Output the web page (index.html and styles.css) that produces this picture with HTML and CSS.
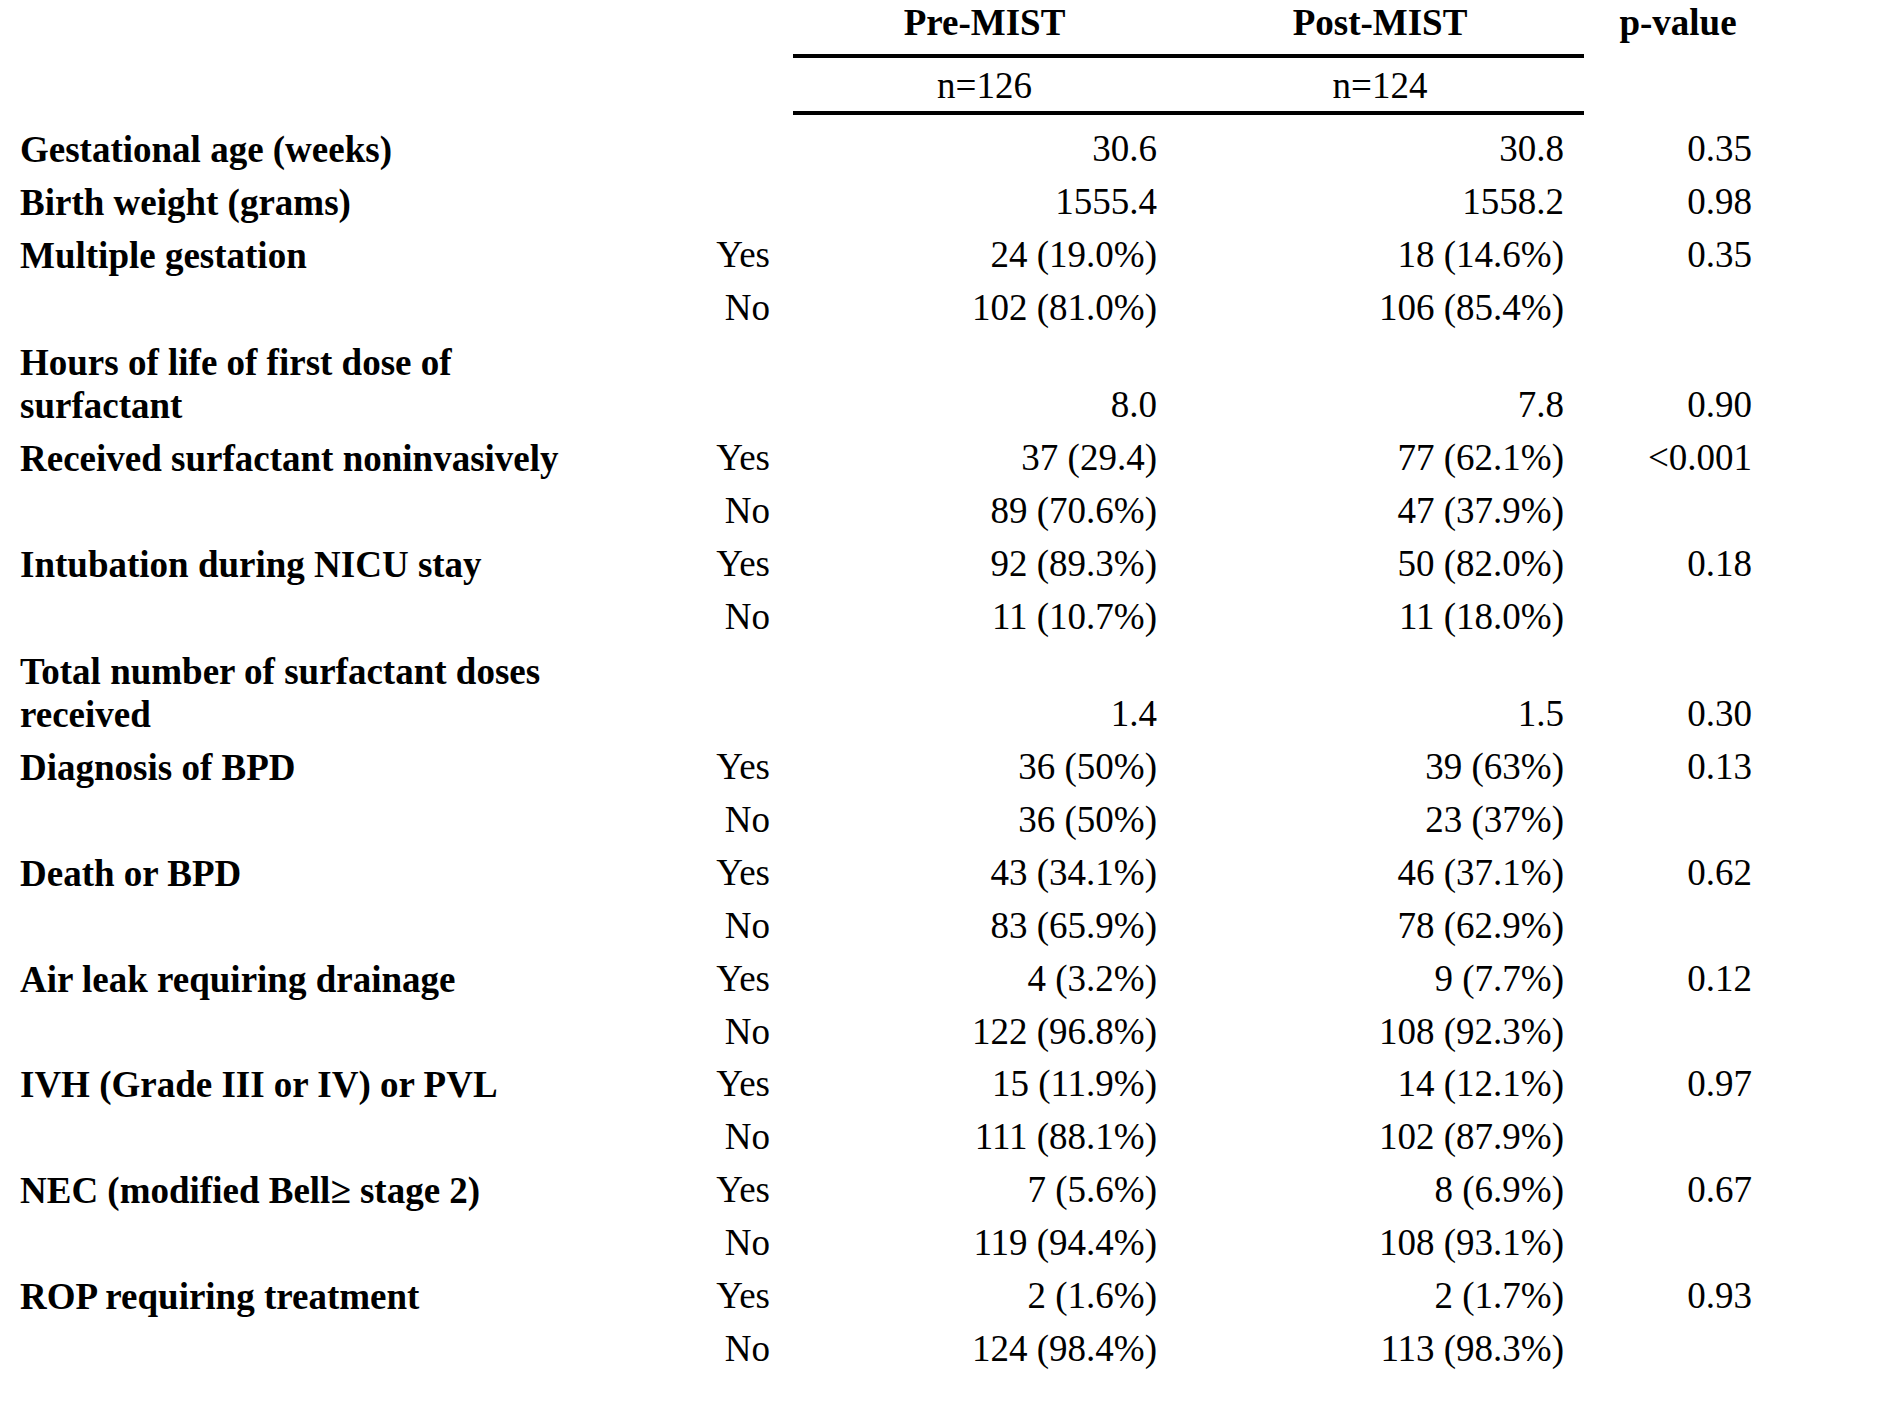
FILE: index.html
```html
<!DOCTYPE html>
<html lang="en">
<head>
<meta charset="utf-8">
<title>Outcomes Pre-MIST vs Post-MIST</title>
<link rel="stylesheet" href="styles.css">
</head>
<body>
<div class="table">
  <div class="hrow hrow1">
    <div class="cell"></div>
    <div class="cell"></div>
    <div class="grp">
      <div class="hcell b">Pre-MIST</div>
      <div class="hcell b">Post-MIST</div>
    </div>
    <div class="hcell b">p-value</div>
  </div>
  <div class="hrow hrow2">
    <div class="cell"></div>
    <div class="cell"></div>
    <div class="grp">
      <div class="hcell">n=126</div>
      <div class="hcell">n=124</div>
    </div>
    <div class="hcell"></div>
  </div>

  <div class="body">
    <div class="row"><div class="lab">Gestational age (weeks)</div><div class="yn"></div><div class="pre">30.6</div><div class="post">30.8</div><div class="pv">0.35</div></div>
    <div class="row"><div class="lab">Birth weight (grams)</div><div class="yn"></div><div class="pre">1555.4</div><div class="post">1558.2</div><div class="pv">0.98</div></div>
    <div class="row"><div class="lab">Multiple gestation</div><div class="yn">Yes</div><div class="pre">24 (19.0%)</div><div class="post">18 (14.6%)</div><div class="pv">0.35</div></div>
    <div class="row"><div class="lab"></div><div class="yn">No</div><div class="pre">102 (81.0%)</div><div class="post">106 (85.4%)</div><div class="pv"></div></div>
    <div class="row"><div class="lab wrap">Hours of life of first dose of surfactant</div><div class="yn"></div><div class="pre">8.0</div><div class="post">7.8</div><div class="pv">0.90</div></div>
    <div class="row"><div class="lab">Received surfactant noninvasively</div><div class="yn">Yes</div><div class="pre">37 (29.4)</div><div class="post">77 (62.1%)</div><div class="pv">&lt;0.001</div></div>
    <div class="row"><div class="lab"></div><div class="yn">No</div><div class="pre">89 (70.6%)</div><div class="post">47 (37.9%)</div><div class="pv"></div></div>
    <div class="row"><div class="lab">Intubation during NICU stay</div><div class="yn">Yes</div><div class="pre">92 (89.3%)</div><div class="post">50 (82.0%)</div><div class="pv">0.18</div></div>
    <div class="row"><div class="lab"></div><div class="yn">No</div><div class="pre">11 (10.7%)</div><div class="post">11 (18.0%)</div><div class="pv"></div></div>
    <div class="row"><div class="lab wrap">Total number of surfactant doses received</div><div class="yn"></div><div class="pre">1.4</div><div class="post">1.5</div><div class="pv">0.30</div></div>
    <div class="row"><div class="lab">Diagnosis of BPD</div><div class="yn">Yes</div><div class="pre">36 (50%)</div><div class="post">39 (63%)</div><div class="pv">0.13</div></div>
    <div class="row"><div class="lab"></div><div class="yn">No</div><div class="pre">36 (50%)</div><div class="post">23 (37%)</div><div class="pv"></div></div>
    <div class="row"><div class="lab">Death or BPD</div><div class="yn">Yes</div><div class="pre">43 (34.1%)</div><div class="post">46 (37.1%)</div><div class="pv">0.62</div></div>
    <div class="row"><div class="lab"></div><div class="yn">No</div><div class="pre">83 (65.9%)</div><div class="post">78 (62.9%)</div><div class="pv"></div></div>
    <div class="row"><div class="lab">Air leak requiring drainage</div><div class="yn">Yes</div><div class="pre">4 (3.2%)</div><div class="post">9 (7.7%)</div><div class="pv">0.12</div></div>
    <div class="row"><div class="lab"></div><div class="yn">No</div><div class="pre">122 (96.8%)</div><div class="post">108 (92.3%)</div><div class="pv"></div></div>
    <div class="row"><div class="lab">IVH (Grade III or IV) or PVL</div><div class="yn">Yes</div><div class="pre">15 (11.9%)</div><div class="post">14 (12.1%)</div><div class="pv">0.97</div></div>
    <div class="row"><div class="lab"></div><div class="yn">No</div><div class="pre">111 (88.1%)</div><div class="post">102 (87.9%)</div><div class="pv"></div></div>
    <div class="row"><div class="lab">NEC (modified Bell≥ stage 2)</div><div class="yn">Yes</div><div class="pre">7 (5.6%)</div><div class="post">8 (6.9%)</div><div class="pv">0.67</div></div>
    <div class="row"><div class="lab"></div><div class="yn">No</div><div class="pre">119 (94.4%)</div><div class="post">108 (93.1%)</div><div class="pv"></div></div>
    <div class="row"><div class="lab">ROP requiring treatment</div><div class="yn">Yes</div><div class="pre">2 (1.6%)</div><div class="post">2 (1.7%)</div><div class="pv">0.93</div></div>
    <div class="row"><div class="lab"></div><div class="yn">No</div><div class="pre">124 (98.4%)</div><div class="post">113 (98.3%)</div><div class="pv"></div></div>
  </div>
</div>
</body>
</html>
```

FILE: styles.css
```css
html, body {
  margin: 0;
  padding: 0;
  background: #ffffff;
}

body {
  font-family: "Liberation Serif", "Times New Roman", serif;
  font-size: 37px;
  line-height: 44px;
  color: #000000;
}

.table {
  width: 1772px;
}

.hrow,
.row {
  display: grid;
  grid-template-columns: 600px 193px 383px 408px 188px;
}

.grp {
  grid-column: 3 / span 2;
  display: grid;
  grid-template-columns: 383px 408px;
  border-bottom: 4px solid #000000;
}

.hcell {
  text-align: center;
  white-space: nowrap;
}

.b {
  font-weight: bold;
}

.hrow1 .grp {
  padding-top: 0.5px;
  padding-bottom: 9.5px;
}

.hrow1 > .hcell {
  padding-top: 0.5px;
}

.hrow2 .grp {
  padding-top: 5.5px;
  padding-bottom: 3.5px;
}

.body {
  padding-top: 8px;
}

.row {
  padding: 4.475px 0;
}

.lab {
  font-weight: bold;
  line-height: 43px;
  padding-top: 1px;
  padding-left: 20px;
  padding-right: 10px;
}

.lab.wrap {
  padding-top: 2px;
}

.yn,
.pre,
.post,
.pv {
  text-align: right;
  white-space: nowrap;
  align-self: end;
}

.yn {
  padding-right: 23px;
}

.pre {
  padding-right: 19px;
}

.post {
  padding-right: 20px;
}

.pv {
  padding-right: 20px;
}
```
